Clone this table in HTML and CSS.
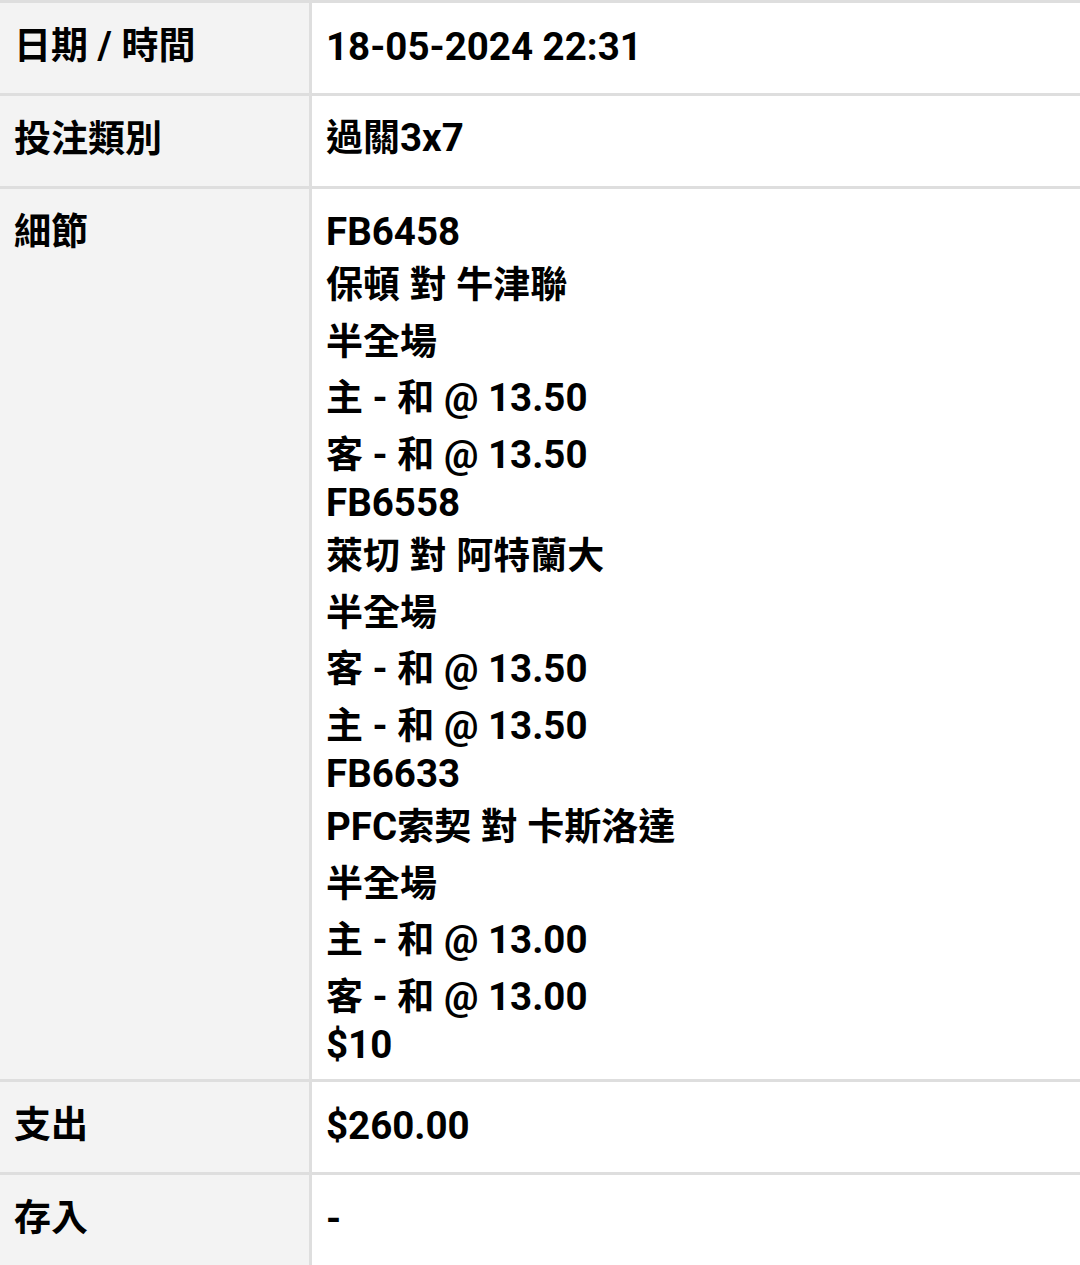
FILE: index.html
```html
<!DOCTYPE html>
<html lang="zh-Hant">
<head>
<meta charset="utf-8">
<title>投注紀錄</title>
<link rel="stylesheet" href="styles.css">
</head>
<body>
<div class="record">
  <div class="label"><span class="zh">日期</span> / <span class="zh">時間</span></div>
  <div class="value">18-05-2024 22:31</div>

  <div class="label"><span class="zh">投注類別</span></div>
  <div class="value value-cjk"><span class="zh">過關</span>3x7</div>

  <div class="label"><span class="zh">細節</span></div>
  <div class="value value-detail">FB6458<br><span class="zh">保頓</span> <span class="zh">對</span> <span class="zh">牛津聯</span><br><span class="zh">半全場</span><br><span class="zh">主</span> - <span class="zh">和</span> @ 13.50<br><span class="zh">客</span> - <span class="zh">和</span> @ 13.50<br>FB6558<br><span class="zh">萊切</span> <span class="zh">對</span> <span class="zh">阿特蘭大</span><br><span class="zh">半全場</span><br><span class="zh">客</span> - <span class="zh">和</span> @ 13.50<br><span class="zh">主</span> - <span class="zh">和</span> @ 13.50<br>FB6633<br>PFC<span class="zh">索契</span> <span class="zh">對</span> <span class="zh">卡斯洛達</span><br><span class="zh">半全場</span><br><span class="zh">主</span> - <span class="zh">和</span> @ 13.00<br><span class="zh">客</span> - <span class="zh">和</span> @ 13.00<br>$10</div>

  <div class="label"><span class="zh">支出</span></div>
  <div class="value">$260.00</div>

  <div class="label"><span class="zh">存入</span></div>
  <div class="value">-</div>
</div>
</body>
</html>
```

FILE: styles.css
```css
html, body {
  margin: 0;
  padding: 0;
  background: #ffffff;
}

body {
  font-family: Roboto, "Noto Sans CJK TC", sans-serif;
  font-size: 38.5px;
  font-weight: 700;
  color: #000000;
}

.record {
  display: grid;
  grid-template-columns: 309px 1fr;
  gap: 3px;
  padding-top: 3px;
  background: #dedede;
}

.label,
.value {
  box-sizing: border-box;
  min-height: 90px;
  padding: 21px 14px 14px 14px;
}

.label {
  padding-top: 12px;
  background: #f3f3f3;
}

.value {
  background: #ffffff;
}

.value-cjk {
  padding-top: 11px;
}

.value-detail {
  padding-top: 20px;
  padding-bottom: 12px;
}

.zh {
  font-family: "Noto Sans CJK TC", sans-serif;
  font-size: 37px;
  line-height: 56.5px;
}
```
